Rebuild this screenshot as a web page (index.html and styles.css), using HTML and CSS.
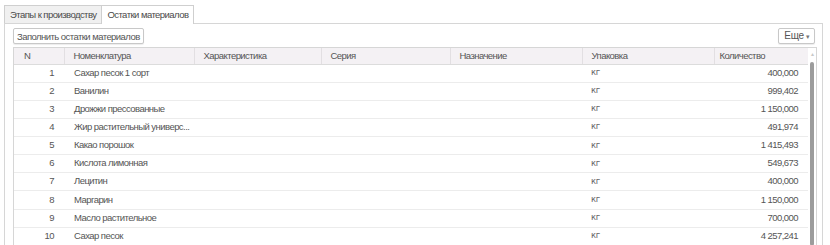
FILE: index.html
```html
<!DOCTYPE html>
<html lang="ru">

<head>
    <meta charset="UTF-8">
    <title>Остатки материалов</title>
    <link rel="stylesheet" href="styles.css">
</head>

<body>
    <div class="tabs">
        <div class="tab">Этапы к производству</div>
        <div class="tab active">Остатки материалов</div>
    </div>
    <div class="panel">
        <div class="toolbar">
            <button class="btn">Заполнить остатки материалов</button>
            <button class="btn more">Еще <span class="caret">&#9662;</span></button>
        </div>
        <div class="grid">
            <table>
                <thead>
                    <tr>
                        <th class="c-n">N</th>
                        <th class="c-name">Номенклатура</th>
                        <th class="c-char">Характеристика</th>
                        <th class="c-series">Серия</th>
                        <th class="c-dest">Назначение</th>
                        <th class="c-pack">Упаковка</th>
                        <th class="c-qty">Количество</th>
                    </tr>
                </thead>
                <tbody>
                    <tr><td class="num">1</td><td>Сахар песок 1 сорт</td><td></td><td></td><td></td><td class="unit">кг</td><td class="num">400,000</td></tr>
                    <tr><td class="num">2</td><td>Ванилин</td><td></td><td></td><td></td><td class="unit">кг</td><td class="num">999,402</td></tr>
                    <tr><td class="num">3</td><td>Дрожжи прессованные</td><td></td><td></td><td></td><td class="unit">кг</td><td class="num">1 150,000</td></tr>
                    <tr><td class="num">4</td><td>Жир растительный универс...</td><td></td><td></td><td></td><td class="unit">кг</td><td class="num">491,974</td></tr>
                    <tr><td class="num">5</td><td>Какао порошок</td><td></td><td></td><td></td><td class="unit">кг</td><td class="num">1 415,493</td></tr>
                    <tr><td class="num">6</td><td>Кислота лимонная</td><td></td><td></td><td></td><td class="unit">кг</td><td class="num">549,673</td></tr>
                    <tr><td class="num">7</td><td>Лецитин</td><td></td><td></td><td></td><td class="unit">кг</td><td class="num">400,000</td></tr>
                    <tr><td class="num">8</td><td>Маргарин</td><td></td><td></td><td></td><td class="unit">кг</td><td class="num">1 150,000</td></tr>
                    <tr><td class="num">9</td><td>Масло растительное</td><td></td><td></td><td></td><td class="unit">кг</td><td class="num">700,000</td></tr>
                    <tr><td class="num">10</td><td>Сахар песок</td><td></td><td></td><td></td><td class="unit">кг</td><td class="num">4 257,241</td></tr>
                </tbody>
            </table>
            <div class="scroll">
                <div class="arrow">&#9652;</div>
                <div class="thumb"></div>
            </div>
        </div>
    </div>
</body>

</html>
```

FILE: styles.css
```css
body {
    margin: 0;
    background-color: #ffffff;
    font-family: "Liberation Sans", Arial, sans-serif;
    font-size: 9.5px;
    letter-spacing: -0.55px;
    color: #555555;
    overflow: hidden;
}

.tabs {
    display: flex;
    padding-left: 4px;
    padding-top: 5px;
}

.tab {
    height: 17px;
    line-height: 17px;
    padding: 0 5px;
    border: 1px solid #cfcfcf;
    border-bottom: none;
    background-color: #f0f0f0;
    color: #4a4a4a;
    white-space: nowrap;
}

.tab + .tab {
    margin-left: -1px;
}

.tab.active {
    background-color: #ffffff;
    position: relative;
    z-index: 1;
    padding: 0 5px;
    height: 18px;
    margin-bottom: -1px;
}

.panel {
    margin-left: 4px;
    width: 819px;
    height: 240px;
    border: 1px solid #d6d6d6;
    box-sizing: border-box;
    padding: 4px 5px 0 8px;
}

.toolbar {
    display: flex;
    justify-content: space-between;
    height: 16px;
    margin-bottom: 3px;
}

.btn {
    font-family: inherit;
    font-size: 9.5px;
    letter-spacing: -0.55px;
    color: #555555;
    height: 16px;
    padding: 0 3px;
    background-color: #ffffff;
    border: 1px solid #c8c8c8;
    border-radius: 2px;
    box-shadow: 0 1px 1px rgba(0, 0, 0, 0.08);
    line-height: 13px;
}

.btn.more {
    padding: 0 4px 0 5px;
    margin-right: 2px;
    font-size: 10px;
    letter-spacing: -0.3px;
}

.caret {
    font-size: 7px;
    color: #777777;
}

.grid {
    display: flex;
    border: 1px solid #d6d6d6;
    border-bottom: none;
}

table {
    width: 794px;
    flex: none;
    border-collapse: collapse;
    table-layout: fixed;
}

th,
td {
    box-sizing: border-box;
    padding: 0 9px;
    white-space: nowrap;
    overflow: hidden;
}

th {
    height: 16px;
    padding-bottom: 1px;
    text-align: left;
    font-weight: normal;
    background-color: #f4f1f4;
    border-left: 1px solid #e2dfe2;
    border-bottom: 1px solid #dcdcdc;
}

.c-n {
    width: 50px;
    border-left: none;
    padding-left: 10px;
}

.c-name {
    width: 130px;
}

.c-char {
    width: 127px;
}

.c-series {
    width: 129px;
}

.c-dest {
    width: 132px;
}

.c-pack {
    width: 132px;
}

.c-qty {
    padding-left: 5px;
}

td {
    height: 18px;
    padding-bottom: 2px;
    border-bottom: 1px solid #ececec;
}

td:nth-child(2) {
    padding-left: 10px;
}

td.num {
    text-align: right;
    padding-right: 10px;
}

td.unit {
    font-family: "DejaVu Sans", sans-serif;
    font-size: 8.5px;
    letter-spacing: -0.4px;
    color: #666666;
}

.scroll {
    width: 8px;
    display: flex;
    flex-direction: column;
    align-items: center;
}

.arrow {
    font-size: 6px;
    line-height: 8px;
    height: 12px;
    padding-top: 2px;
    color: #c8c8c8;
}

.thumb {
    width: 4px;
    height: 184px;
    border-radius: 2px;
    background-color: #9c9c9c;
}
```
